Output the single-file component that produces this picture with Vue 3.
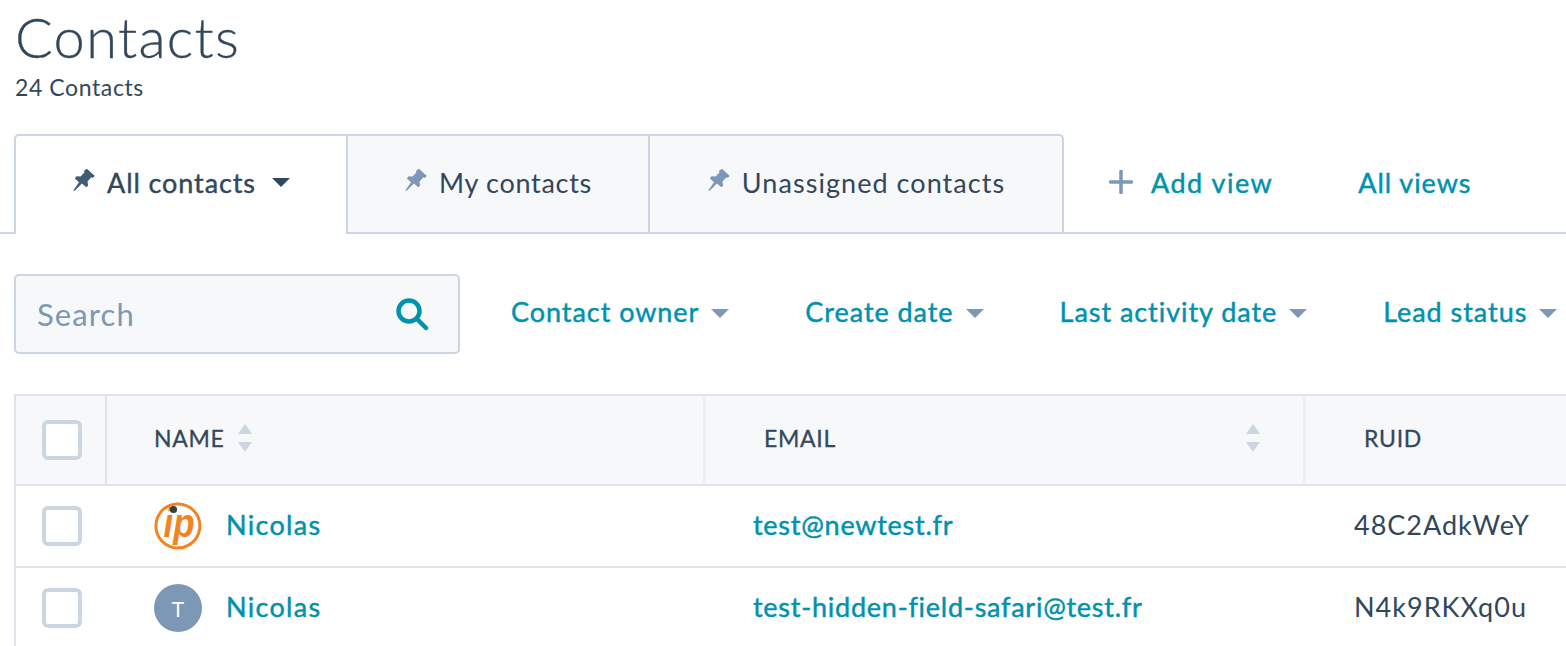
<template>
  <div class="page">
    <header class="head">
      <h1>Contacts</h1>
      <p>24 Contacts</p>
    </header>

    <nav class="tabs">
      <div class="tab active">
        <svg class="pin" viewBox="0 0 22 22"><path d="M13.6 0.8l7.4 6.6-2.2 1.7-1-.7-3.6 4 .6 3.6-1.7 1.7-4-3.5-6.6 6.6-1.3-.1 5.2-7.6-3.8-3.5 1.6-2 3.7.2 3.6-4-.7-1z" /></svg>
        <span>All contacts</span>
        <i class="caret dark"></i>
      </div>
      <div class="tab">
        <svg class="pin" viewBox="0 0 22 22"><path d="M13.6 0.8l7.4 6.6-2.2 1.7-1-.7-3.6 4 .6 3.6-1.7 1.7-4-3.5-6.6 6.6-1.3-.1 5.2-7.6-3.8-3.5 1.6-2 3.7.2 3.6-4-.7-1z" /></svg>
        <span>My contacts</span>
      </div>
      <div class="tab last">
        <svg class="pin" viewBox="0 0 22 22"><path d="M13.6 0.8l7.4 6.6-2.2 1.7-1-.7-3.6 4 .6 3.6-1.7 1.7-4-3.5-6.6 6.6-1.3-.1 5.2-7.6-3.8-3.5 1.6-2 3.7.2 3.6-4-.7-1z" /></svg>
        <span>Unassigned contacts</span>
      </div>
      <div class="tab-links">
        <a class="add">
          <svg class="plus" viewBox="0 0 24 24"><path d="M12 1.5v21M1.5 12h21" /></svg>
          Add view
        </a>
        <a>All views</a>
      </div>
    </nav>

    <div class="filters">
      <div class="search">
        <span>Search</span>
        <svg viewBox="0 0 34 34"><circle cx="14" cy="14" r="10.5" /><path d="M22 22l9 9" /></svg>
      </div>
      <a v-for="f in filters" :key="f" class="filter">{{ f }}<i class="caret"></i></a>
    </div>

    <div class="table">
      <div class="row header">
        <div class="cell check"><b class="box"></b></div>
        <div class="cell name">
          NAME
          <span class="sort"><i class="up"></i><i class="down"></i></span>
        </div>
        <div class="cell email">
          EMAIL
          <span class="sort"><i class="up"></i><i class="down"></i></span>
        </div>
        <div class="cell ruid">RUID</div>
      </div>

      <div v-for="c in contacts" :key="c.ruid" class="row">
        <div class="cell check"><b class="box"></b></div>
        <div class="cell name">
          <svg v-if="c.logo" class="avatar" viewBox="0 0 48 48">
            <path d="M6 11A22 22 0 1 1 3 31A24 24 0 0 1 6 11" fill="none" stroke="#f58220" stroke-width="3" />
            <text x="9.5" y="35" class="logo-text" textLength="31" lengthAdjust="spacingAndGlyphs">ip</text>
            <circle cx="19.5" cy="7.5" r="3.6" fill="#3b3b40" />
          </svg>
          <span v-else class="avatar letter">T</span>
          <a>{{ c.name }}</a>
        </div>
        <div class="cell email"><a>{{ c.email }}</a></div>
        <div class="cell ruid">{{ c.ruid }}</div>
      </div>
    </div>
  </div>
</template>

<script setup>
const filters = ['Contact owner', 'Create date', 'Last activity date', 'Lead status']

const contacts = [
  { name: 'Nicolas', email: 'test@newtest.fr', ruid: '48C2AdkWeY', logo: true },
  { name: 'Nicolas', email: 'test-hidden-field-safari@test.fr', ruid: 'N4k9RKXq0u', logo: false }
]
</script>

<style>
html, body {
  margin: 0;
  background: #fff;
  overflow: hidden;
}
</style>

<style scoped>
.page {
  width: 1566px;
  height: 646px;
  overflow: hidden;
  font-family: Lato, "Open Sans", sans-serif;
  color: #33475b;
}

a {
  color: #0091ae;
  -webkit-text-stroke: 0.45px currentColor;
  letter-spacing: 0.95px;
}

.head {
  padding: 6px 0 0 15px;
  height: 128px;
  box-sizing: border-box;
}

.head h1 {
  margin: 0;
  font-size: 56px;
  line-height: 62px;
  font-weight: 300;
  letter-spacing: 1.3px;
  -webkit-text-stroke: 0.3px currentColor;
}

.head p {
  margin: 5px 0 0;
  font-size: 23px;
  line-height: 28px;
  letter-spacing: 0.6px;
}

/* tab row */
.tabs {
  display: flex;
  height: 100px;
  margin-top: 6px;
  border-bottom: 2px solid #cbd6e2;
  box-sizing: border-box;
  padding-left: 14px;
}

.tab {
  display: flex;
  align-items: center;
  justify-content: center;
  gap: 11px;
  flex: none;
  width: 302px;
  height: 100px;
  box-sizing: border-box;
  background: #f6f8fa;
  border: 2px solid #cbd6e2;
  border-left: none;
  font-size: 27px;
  letter-spacing: 0.7px;
  padding-bottom: 4px;
}

.tab.active {
  width: 334px;
  background: #fff;
  border-left: 2px solid #cbd6e2;
  border-bottom: none;
  border-radius: 5px 0 0 0;
  letter-spacing: 0.9px;
  -webkit-text-stroke: 0.4px currentColor;
  padding-bottom: 6px;
}

.tab.last {
  width: 414px;
  border-radius: 0 5px 0 0;
  border-bottom: none;
  height: 98px;
  letter-spacing: 1.05px;
  padding-bottom: 4px;
}

.pin {
  width: 24px;
  height: 24px;
  fill: #7c98b6;
  margin-top: -5px;
  stroke: none;
}

.active .pin {
  fill: #425b76;
}

.active .caret {
  margin-left: 5px;
}

.caret {
  display: inline-block;
  flex: none;
  width: 0;
  height: 0;
  border-left: 9px solid transparent;
  border-right: 9px solid transparent;
  border-top: 9px solid #7c98b6;
}

.caret.dark {
  border-top-color: #33475b;
}

.tab-links {
  display: flex;
  align-items: center;
  gap: 85px;
  padding: 0 0 2px 45px;
  font-size: 27px;
}

.add {
  display: flex;
  align-items: center;
  gap: 18px;
  letter-spacing: 1.5px;
}

.plus {
  width: 24px;
  height: 24px;
  fill: none;
  stroke: #7c98b6;
  stroke-width: 3.5;
  stroke-linecap: round;
}

/* search + filter row */
.filters {
  display: flex;
  align-items: center;
  margin-top: 40px;
  padding-left: 14px;
  white-space: nowrap;
}

.search {
  display: flex;
  align-items: center;
  justify-content: space-between;
  flex: none;
  width: 446px;
  height: 80px;
  box-sizing: border-box;
  padding: 0 29px 0 21px;
  margin-right: 51px;
  background: #f6f8fa;
  border: 2px solid #cbd6e2;
  border-radius: 5px;
  font-size: 31px;
  letter-spacing: 1.1px;
  color: #7c98b6;
}

.search svg {
  width: 34px;
  height: 34px;
  fill: none;
  stroke: #0091ae;
  stroke-width: 4.5;
  stroke-linecap: round;
}

.filter {
  display: flex;
  align-items: center;
  flex: none;
  gap: 12px;
  margin-right: 76px;
  font-size: 27px;
  padding-bottom: 6px;
}

.filter .caret {
  margin-top: 4px;
}

/* table */
.table {
  margin: 40px 0 0 14px;
  width: 1700px;
  border-left: 2px solid #dfe3eb;
  border-top: 2px solid #dfe3eb;
}

.row {
  display: grid;
  grid-template-columns: 91px 599px 600px 1fr;
  height: 80px;
  border-bottom: 2px solid #dfe3eb;
  font-size: 27px;
}

.row.header {
  height: 88px;
  background: #f6f8fa;
  font-size: 23px;
  letter-spacing: 0.7px;
  -webkit-text-stroke: 0.3px currentColor;
}

.cell {
  display: flex;
  align-items: center;
  box-sizing: border-box;
  min-width: 0;
}

.cell.check {
  justify-content: center;
}

.header .check {
  border-right: 2px solid #dfe3eb;
  padding-left: 2px;
}

.header .name,
.header .email {
  border-right: 3px solid #eaf0f6;
  padding-bottom: 4px;
}

.box {
  display: block;
  width: 40px;
  height: 40px;
  box-sizing: border-box;
  background: #fff;
  border: 4px solid #cbd6e2;
  border-radius: 6px;
}

.cell.name {
  padding-left: 47px;
  gap: 13px;
}

.row:not(.header) .name {
  gap: 24px;
}

.row:not(.header) .name a {
  letter-spacing: 1.3px;
}

.row:not(.header) a {
  padding-bottom: 4px;
}

.cell.email {
  padding-left: 58px;
  padding-right: 43px;
  justify-content: space-between;
}

.row:not(.header) .email {
  padding-left: 47px;
}

.row:not(.header) .email a {
  letter-spacing: 0.75px;
}

.cell.ruid {
  padding-left: 58px;
  padding-bottom: 4px;
}

.row:not(.header) .ruid {
  padding-left: 48px;
  letter-spacing: 1px;
}

.sort {
  display: flex;
  flex-direction: column;
  gap: 8px;
}

.sort i {
  display: block;
  width: 0;
  height: 0;
  border-left: 7px solid transparent;
  border-right: 7px solid transparent;
}

.sort .up {
  border-bottom: 10px solid #cbd6e2;
}

.sort .down {
  border-top: 10px solid #cbd6e2;
}

.avatar {
  width: 48px;
  height: 48px;
  flex: none;
}

.logo-text {
  font-family: "Liberation Sans", sans-serif;
  font-style: italic;
  font-weight: 700;
  font-size: 40px;
  fill: #f58220;
}

.letter {
  display: flex;
  align-items: center;
  justify-content: center;
  border-radius: 50%;
  background: #7c98b6;
  color: #fff;
  font-size: 21px;
  letter-spacing: 0;
}
</style>
